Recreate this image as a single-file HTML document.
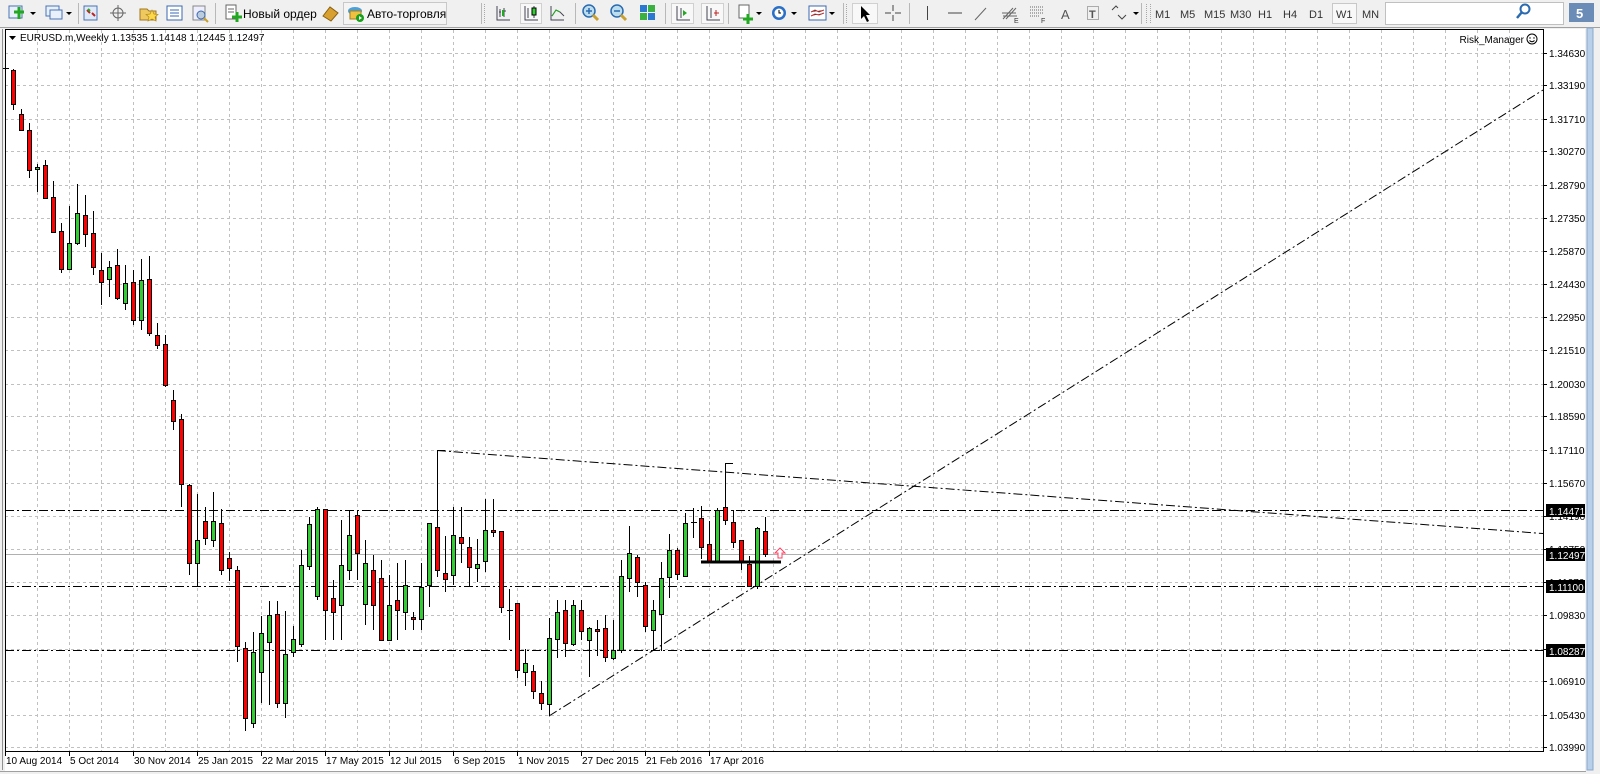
<!DOCTYPE html>
<html><head><meta charset="utf-8"><style>
html,body{margin:0;padding:0;background:#f0f0f0;overflow:hidden}
svg{display:block}
text{font-family:"Liberation Sans",sans-serif}
</style></head><body>
<svg width="1600" height="774" viewBox="0 0 1600 774" xmlns="http://www.w3.org/2000/svg">
<rect width="1600" height="774" fill="#f0f0f0"/>
<rect x="0" y="0" width="1600" height="27" fill="#f0f0f0"/>
<line x1="0" y1="27.5" x2="1600" y2="27.5" stroke="#a0a0a0"/>
<g stroke="#b8b8b8">
<line x1="78.5" y1="3" x2="78.5" y2="24"/><line x1="215.5" y1="3" x2="215.5" y2="24"/>
<line x1="481.5" y1="3" x2="481.5" y2="24"/><line x1="575.5" y1="3" x2="575.5" y2="24"/>
<line x1="665.5" y1="3" x2="665.5" y2="24"/><line x1="728.5" y1="3" x2="728.5" y2="24"/>
<line x1="843.5" y1="3" x2="843.5" y2="24"/><line x1="909.5" y1="3" x2="909.5" y2="24"/>
<line x1="1141.5" y1="3" x2="1141.5" y2="24"/>
</g>
<g stroke="#a8a8a8" stroke-dasharray="1 1"><line x1="484.5" y1="4" x2="484.5" y2="23"/><line x1="846.5" y1="4" x2="846.5" y2="23"/><line x1="1150.5" y1="4" x2="1150.5" y2="23"/><line x1="1146.5" y1="4" x2="1146.5" y2="23"/></g>
<rect x="9" y="6" width="13" height="12" fill="#e8f0fb" stroke="#4a74b5"/><path d="M14 12h10M19 7v12" stroke="#22a822" stroke-width="3"/>
<path d="M30 12l3 3 3-3z" fill="#000"/>
<rect x="46" y="6" width="13" height="10" fill="#e8f0fb" stroke="#4a74b5"/><rect x="50" y="10" width="12" height="9" fill="#e8f0fb" stroke="#4a74b5"/>
<path d="M66 12l3 3 3-3z" fill="#000"/>
<rect x="84" y="6" width="13" height="14" fill="#dfe9f7" stroke="#4a74b5"/><path d="M87 10l3 3M92 13l3 3" stroke="#c02020" stroke-width="2"/><path d="M88 9l2 2" stroke="#22a822" stroke-width="2"/>
<circle cx="118" cy="13" r="5" fill="none" stroke="#666"/><path d="M118 5v16M110 13h16" stroke="#666"/>
<path d="M140 9h7l2 2h7v9h-16z" fill="#f0c860" stroke="#a07820"/><path d="M152 10l2 4 4 .5-3 2.5 1 4-4-2-4 2 1-4-3-2.5 4-.5z" fill="#ffd84a" stroke="#b08a20" stroke-width=".7"/>
<rect x="167" y="6" width="15" height="14" fill="#fff" stroke="#3a68b0"/><path d="M170 10h9M170 13h9M170 16h9" stroke="#3a68b0"/>
<rect x="193" y="6" width="12" height="14" fill="#eef" stroke="#888"/><circle cx="201" cy="15" r="4" fill="#bcd" stroke="#3a68b0"/><path d="M204 18l4 4" stroke="#c8a030" stroke-width="2"/>
<rect x="226" y="5" width="10" height="14" fill="#fff" stroke="#666"/><path d="M228 9h6M228 12h6" stroke="#666"/><path d="M232 17h10M237 12v10" stroke="#22a822" stroke-width="3"/>
<text x="243" y="18" font-size="12" fill="#000">Новый ордер</text>
<path d="M323 16l7-9 8 6-7 8z" fill="#d8a030" stroke="#8a6010"/>
<rect x="343.5" y="2.5" width="103" height="22" fill="#f4f4f4" stroke="#c8c8c8"/>
<ellipse cx="355" cy="11" rx="7" ry="4" fill="#4aa0d8"/><rect x="350" y="11" width="11" height="8" fill="#f0c040" stroke="#a08020"/><circle cx="360" cy="18" r="4" fill="#18a018"/><path d="M359 16l3 2-3 2z" fill="#fff"/>
<text x="367" y="18" font-size="12" fill="#000">Авто-торговля</text>
<path d="M497 6v14h13M500 9v8M504 8v9M506 11h-2M501 12h-2" stroke="#445" fill="none"/><path d="M503 10v6" stroke="#22a822" stroke-width="2"/>
<rect x="520.5" y="3.5" width="21" height="20" fill="#f8f8f8" stroke="#d0d0d0"/>
<path d="M525 6v14h13M528 8v10M534 6v12" stroke="#445" fill="none"/><rect x="532" y="8" width="4" height="7" fill="#3c3" stroke="#000"/>
<path d="M551 6v14h13M552 16l4-6 4 2 4 4" stroke="#445" fill="none"/><path d="M552 16l4-6 4 2" stroke="#22a822" fill="none"/>
<circle cx="589" cy="11" r="6" fill="#bde" stroke="#2a6ab0" stroke-width="1.5"/><path d="M586 11h6M589 8v6" stroke="#2a6ab0" stroke-width="1.5"/><path d="M593 15l5 5" stroke="#c8a030" stroke-width="3"/>
<circle cx="617" cy="11" r="6" fill="#bde" stroke="#2a6ab0" stroke-width="1.5"/><path d="M614 11h6" stroke="#2a6ab0" stroke-width="1.5"/><path d="M621 15l5 5" stroke="#c8a030" stroke-width="3"/>
<rect x="640" y="5" width="7" height="7" fill="#2a78d0"/><rect x="648" y="5" width="7" height="7" fill="#3ab040"/><rect x="640" y="13" width="7" height="7" fill="#3ab040"/><rect x="648" y="13" width="7" height="7" fill="#2a78d0"/>
<rect x="671.5" y="3.5" width="22" height="20" fill="#f8f8f8" stroke="#d0d0d0"/><path d="M677 6v14h13M681 8v10" stroke="#445" fill="none"/><path d="M683 10l4 3-4 3z" fill="#22a822"/>
<rect x="701.5" y="3.5" width="22" height="20" fill="#f8f8f8" stroke="#d0d0d0"/><path d="M707 6v14h13M711 8v10" stroke="#445" fill="none"/><path d="M714 13h5M716 10v6" stroke="#c02020"/>
<rect x="739" y="5" width="10" height="13" fill="#fff" stroke="#666"/><path d="M743 19h10M748 14v10" stroke="#22a822" stroke-width="3"/><path d="M756 12l3 3 3-3z" fill="#000"/>
<circle cx="779" cy="13" r="7" fill="#2a70c8"/><circle cx="779" cy="13" r="4.5" fill="#fff"/><path d="M779 10v3h2" stroke="#000" fill="none"/><path d="M791 12l3 3 3-3z" fill="#000"/>
<rect x="809" y="6" width="17" height="14" fill="#fff" stroke="#3a68b0"/><path d="M811 12l4-2 4 2 5-2M811 16l4-2 4 1 5-2" stroke="#c03030"/><path d="M829 12l3 3 3-3z" fill="#000"/>
<rect x="852.5" y="3.5" width="25" height="20" fill="#f8f8f8" stroke="#d0d0d0"/><path d="M861 6v13l3-3 3 6 2-1-3-6h4z" fill="#000"/>
<path d="M893 5v6M893 15v6M885 13h6M895 13h6" stroke="#444"/>
<path d="M927.5 6v14" stroke="#444"/><path d="M948 13h14" stroke="#444"/><path d="M975 20l11-12" stroke="#666"/>
<path d="M1003 19l10-11M1006 19l10-11M1002 13h14M1003 16h14" stroke="#666"/><text x="1014" y="23" font-size="7" fill="#333">E</text>
<path d="M1030 7h13M1030 10h13M1030 13h13M1030 16h10" stroke="#666" stroke-dasharray="1 1"/><text x="1041" y="23" font-size="7" fill="#333">F</text>
<text x="1061" y="19" font-size="13" fill="#555">A</text>
<rect x="1087.5" y="6.5" width="11" height="13" fill="none" stroke="#666" stroke-dasharray="1 1"/><text x="1089" y="18" font-size="11" fill="#555" font-weight="bold">T</text>
<path d="M1112 10l4-4 2 2M1118 15l4 4 4-4" stroke="#444" fill="none"/><path d="M1133 12l3 3 3-3z" fill="#000"/>
<g font-size="11" fill="#333">
<text x="1155" y="18">M1</text><text x="1180" y="18">M5</text><text x="1204" y="18">M15</text><text x="1230" y="18">M30</text><text x="1258" y="18">H1</text><text x="1283" y="18">H4</text><text x="1309" y="18">D1</text>
<rect x="1332.5" y="3.5" width="24" height="20" fill="#f8f8f8" stroke="#c8c8c8"/><text x="1336" y="18">W1</text><text x="1362" y="18">MN</text>
</g>
<rect x="1385.5" y="2.5" width="178" height="22" fill="#fff" stroke="#c0c0c0"/>
<circle cx="1525" cy="9" r="4.5" fill="none" stroke="#2a6ab0" stroke-width="2"/><path d="M1522 12l-5 6" stroke="#2a6ab0" stroke-width="2.5"/>
<rect x="1569" y="3" width="25" height="19" fill="#6c8cb8"/><text x="1576" y="18" font-size="13" font-weight="bold" fill="#fff">5</text>
<rect x="0" y="28" width="1600" height="746" fill="#f0f0f0"/>
<rect x="5" y="29" width="1580" height="742" fill="#fff"/>
<rect x="1586" y="28" width="14" height="746" fill="#f0f0f0"/>
<rect x="1587" y="28" width="6" height="742" fill="#b8d0ea" stroke="#8aa8cc"/>
<line x1="2.5" y1="29" x2="2.5" y2="770" stroke="#909090"/>
<g stroke="#c0c0c0" stroke-dasharray="3 3">
<path d="M5 53.5H1543M5 85.5H1543M5 119.5H1543M5 151.5H1543M5 185.5H1543M5 218.5H1543M5 251.5H1543M5 284.5H1543M5 317.5H1543M5 350.5H1543M5 384.5H1543M5 416.5H1543M5 450.5H1543M5 483.5H1543M5 516.5H1543M5 549.5H1543M5 582.5H1543M5 615.5H1543M5 649.5H1543M5 681.5H1543M5 715.5H1543M5 747.5H1543"/>
<path d="M37.5 30V751M69.5 30V751M101.5 30V751M133.5 30V751M165.5 30V751M197.5 30V751M229.5 30V751M261.5 30V751M293.5 30V751M325.5 30V751M357.5 30V751M389.5 30V751M421.5 30V751M453.5 30V751M485.5 30V751M517.5 30V751M549.5 30V751M581.5 30V751M613.5 30V751M645.5 30V751M677.5 30V751M709.5 30V751M741.5 30V751M773.5 30V751M805.5 30V751M837.5 30V751M869.5 30V751M901.5 30V751M933.5 30V751M965.5 30V751M997.5 30V751M1029.5 30V751M1061.5 30V751M1093.5 30V751M1125.5 30V751M1157.5 30V751M1189.5 30V751M1221.5 30V751M1253.5 30V751M1285.5 30V751M1317.5 30V751M1349.5 30V751M1381.5 30V751M1413.5 30V751M1445.5 30V751M1477.5 30V751M1509.5 30V751"/>
</g>
<line x1="5" y1="554.5" x2="1543" y2="554.5" stroke="#b0b0b0"/>
<g stroke="#000" stroke-dasharray="9 3 2 3">
<line x1="5" y1="510.5" x2="1543" y2="510.5"/>
<line x1="5" y1="586.5" x2="1543" y2="586.5"/>
<line x1="5" y1="650.5" x2="1543" y2="650.5"/>
<line x1="437" y1="450.5" x2="1543" y2="533.5"/>
<line x1="549" y1="716" x2="1543" y2="90"/>
</g>
<path stroke="#000" fill="none" d="M5.5 63V83M13.5 69V110M21.5 109V130M29.5 123V178M37.5 164V192M45.5 160V198M53.5 181V233M61.5 223V273M69.5 206V270M77.5 184V245M85.5 195V247M93.5 211V275M101.5 253V305M109.5 261V297M117.5 249V300M125.5 265V310M133.5 270V325M141.5 259V330M149.5 256V336M157.5 323V349M165.5 335V387M173.5 390V430M181.5 414V507M189.5 484V575M197.5 494V586M205.5 507V545M213.5 492V547M221.5 509V575M229.5 552V581M237.5 566V662M245.5 642V731M253.5 632V728M261.5 616V703M269.5 601V705M277.5 601V708M285.5 611V718M293.5 626V657M301.5 550V647M309.5 517V570M317.5 507V600M325.5 509V640M333.5 580V640M341.5 520V640M349.5 510V580M357.5 510V580M365.5 540V625M373.5 555V630M381.5 560V640M389.5 575V640M397.5 563V640M405.5 560V630M413.5 612V630M421.5 563V630M429.5 523V607M437.5 450V577M445.5 536V592M453.5 507V585M461.5 507V563M469.5 537V587M477.5 539V582M485.5 499V572M493.5 499V537M501.5 531V613M509.5 589V640M517.5 603V678M525.5 649V686M533.5 665V699M541.5 681V710M549.5 618V716M557.5 600V658M565.5 600V657M573.5 600V646M581.5 600V640M589.5 627V677M597.5 620V656M605.5 615V662M613.5 620V660M621.5 560V653M629.5 526V592M637.5 555V597M645.5 582V632M653.5 600V651M661.5 562V651M669.5 534V598M677.5 548V580M685.5 513V577M693.5 508V538M701.5 506V559M709.5 521V561M717.5 508V561M725.5 463V525M733.5 510V548M741.5 540V570M749.5 556V586M757.5 527V589M765.5 517V557"/>
<path stroke="#000" d="M437 450.5h8M725 463.5h8M3 68.5h6M507 610.5h6M691 522.5h6"/>
<g stroke="#000" fill="#ff0000">
<rect x="11.5" y="70.5" width="4" height="34"/><rect x="19.5" y="114.5" width="4" height="16"/><rect x="27.5" y="130.5" width="4" height="40"/>
<rect x="43.5" y="165.5" width="4" height="33"/><rect x="51.5" y="197.5" width="4" height="35"/><rect x="59.5" y="231.5" width="4" height="38"/>
<rect x="83.5" y="215.5" width="4" height="19"/><rect x="91.5" y="233.5" width="4" height="34"/><rect x="99.5" y="270.5" width="4" height="12"/>
<rect x="115.5" y="265.5" width="4" height="33"/><rect x="131.5" y="282.5" width="4" height="38"/><rect x="147.5" y="279.5" width="4" height="54"/>
<rect x="155.5" y="335.5" width="4" height="10"/><rect x="163.5" y="344.5" width="4" height="41"/><rect x="171.5" y="400.5" width="4" height="21"/>
<rect x="179.5" y="419.5" width="4" height="65"/><rect x="187.5" y="485.5" width="4" height="78"/><rect x="203.5" y="521.5" width="4" height="17"/>
<rect x="219.5" y="523.5" width="4" height="47"/><rect x="227.5" y="558.5" width="4" height="10"/><rect x="235.5" y="570.5" width="4" height="76"/>
<rect x="243.5" y="648.5" width="4" height="70"/><rect x="275.5" y="614.5" width="4" height="89"/><rect x="323.5" y="509.5" width="4" height="101"/>
<rect x="331.5" y="598.5" width="4" height="14"/><rect x="355.5" y="515.5" width="4" height="38"/><rect x="371.5" y="570.5" width="4" height="35"/>
<rect x="379.5" y="578.5" width="4" height="62"/><rect x="395.5" y="600.5" width="4" height="10"/><rect x="411.5" y="617.5" width="4" height="2"/>
<rect x="435.5" y="527.5" width="4" height="43"/><rect x="443.5" y="573.5" width="4" height="6"/><rect x="459.5" y="537.5" width="4" height="6"/>
<rect x="467.5" y="547.5" width="4" height="20"/><rect x="491.5" y="530.5" width="4" height="2"/><rect x="499.5" y="531.5" width="4" height="76"/>
<rect x="515.5" y="603.5" width="4" height="67"/><rect x="531.5" y="671.5" width="4" height="20"/><rect x="539.5" y="693.5" width="4" height="10"/>
<rect x="563.5" y="610.5" width="4" height="33"/><rect x="579.5" y="610.5" width="4" height="21"/><rect x="595.5" y="629.5" width="4" height="2"/>
<rect x="603.5" y="628.5" width="4" height="29"/><rect x="635.5" y="557.5" width="4" height="25"/><rect x="643.5" y="585.5" width="4" height="41"/>
<rect x="675.5" y="550.5" width="4" height="24"/><rect x="699.5" y="518.5" width="4" height="29"/><rect x="707.5" y="544.5" width="4" height="17"/>
<rect x="723.5" y="507.5" width="4" height="13"/><rect x="731.5" y="522.5" width="4" height="20"/><rect x="739.5" y="540.5" width="4" height="21"/>
<rect x="747.5" y="564.5" width="4" height="22"/><rect x="763.5" y="531.5" width="4" height="23"/>
</g>
<g stroke="#000" fill="#33cc33">
<rect x="35.5" y="167.5" width="4" height="2"/><rect x="67.5" y="243.5" width="4" height="26"/><rect x="75.5" y="213.5" width="4" height="30"/>
<rect x="107.5" y="267.5" width="4" height="12"/><rect x="123.5" y="283.5" width="4" height="20"/><rect x="139.5" y="280.5" width="4" height="40"/>
<rect x="195.5" y="540.5" width="4" height="23"/><rect x="211.5" y="521.5" width="4" height="19"/><rect x="251.5" y="652.5" width="4" height="71"/>
<rect x="259.5" y="633.5" width="4" height="39"/><rect x="267.5" y="615.5" width="4" height="27"/><rect x="283.5" y="654.5" width="4" height="49"/>
<rect x="291.5" y="639.5" width="4" height="13"/><rect x="299.5" y="565.5" width="4" height="79"/><rect x="307.5" y="524.5" width="4" height="42"/>
<rect x="315.5" y="509.5" width="4" height="87"/><rect x="339.5" y="565.5" width="4" height="40"/><rect x="347.5" y="535.5" width="4" height="35"/>
<rect x="363.5" y="563.5" width="4" height="41"/><rect x="387.5" y="605.5" width="4" height="35"/><rect x="403.5" y="585.5" width="4" height="27"/>
<rect x="419.5" y="587.5" width="4" height="32"/><rect x="427.5" y="523.5" width="4" height="62"/><rect x="451.5" y="535.5" width="4" height="40"/>
<rect x="475.5" y="564.5" width="4" height="4"/><rect x="483.5" y="530.5" width="4" height="31"/><rect x="523.5" y="663.5" width="4" height="9"/>
<rect x="547.5" y="638.5" width="4" height="66"/><rect x="555.5" y="612.5" width="4" height="27"/><rect x="571.5" y="605.5" width="4" height="39"/>
<rect x="587.5" y="628.5" width="4" height="12"/><rect x="611.5" y="650.5" width="4" height="8"/><rect x="619.5" y="576.5" width="4" height="74"/>
<rect x="627.5" y="553.5" width="4" height="25"/><rect x="651.5" y="610.5" width="4" height="20"/><rect x="659.5" y="578.5" width="4" height="36"/>
<rect x="667.5" y="550.5" width="4" height="27"/><rect x="683.5" y="523.5" width="4" height="53"/><rect x="715.5" y="510.5" width="4" height="51"/>
<rect x="755.5" y="528.5" width="4" height="58"/>
</g>
<line x1="701" y1="562" x2="781" y2="562" stroke="#000" stroke-width="3"/>
<path d="M780 548l-5 5h3v5h4v-5h3z" fill="#fff" stroke="#ff4060"/>
<rect x="5.5" y="29.5" width="1538" height="722" fill="none" stroke="#000"/>
<path d="M9 36h7l-3.5 4z" fill="#000"/>
<text x="20" y="41" font-size="10" fill="#000">EURUSD.m,Weekly  1.13535 1.14148 1.12445 1.12497</text>
<text x="1524" y="43" font-size="10" fill="#000" text-anchor="end">Risk_Manager</text>
<circle cx="1532" cy="39" r="5" fill="none" stroke="#000"/><circle cx="1530" cy="38" r=".7"/><circle cx="1534" cy="38" r=".7"/><path d="M1529.5 40.5q2.5 2.5 5 0" fill="none" stroke="#000"/>
<g stroke="#000"><path d="M1543 53.5h4M1543 85.5h4M1543 119.5h4M1543 151.5h4M1543 185.5h4M1543 218.5h4M1543 251.5h4M1543 284.5h4M1543 317.5h4M1543 350.5h4M1543 384.5h4M1543 416.5h4M1543 450.5h4M1543 483.5h4M1543 516.5h4M1543 549.5h4M1543 582.5h4M1543 615.5h4M1543 649.5h4M1543 681.5h4M1543 715.5h4M1543 747.5h4"/></g>
<g font-size="10" fill="#000">
<text x="1549" y="57">1.34630</text><text x="1549" y="89">1.33190</text><text x="1549" y="123">1.31710</text><text x="1549" y="155">1.30270</text>
<text x="1549" y="189">1.28790</text><text x="1549" y="222">1.27350</text><text x="1549" y="255">1.25870</text><text x="1549" y="288">1.24430</text>
<text x="1549" y="321">1.22950</text><text x="1549" y="354">1.21510</text><text x="1549" y="388">1.20030</text><text x="1549" y="420">1.18590</text>
<text x="1549" y="454">1.17110</text><text x="1549" y="487">1.15670</text><text x="1549" y="520">1.14190</text><text x="1549" y="553">1.12750</text>
<text x="1549" y="586">1.11270</text><text x="1549" y="619">1.09830</text><text x="1549" y="653">1.08350</text><text x="1549" y="685">1.06910</text>
<text x="1549" y="719">1.05430</text><text x="1549" y="751">1.03990</text>
</g>
<g fill="#000"><rect x="1546" y="504" width="39" height="13"/><rect x="1546" y="548" width="39" height="13"/><rect x="1546" y="580" width="39" height="13"/><rect x="1546" y="644" width="39" height="13"/></g>
<g font-size="10" fill="#fff"><text x="1549" y="515">1.14471</text><text x="1549" y="559">1.12497</text><text x="1549" y="591">1.11100</text><text x="1549" y="655">1.08287</text></g>
<path stroke="#000" d="M5.5 751v5M69.5 751v5M133.5 751v5M197.5 751v5M261.5 751v5M325.5 751v5M389.5 751v5M453.5 751v5M517.5 751v5M581.5 751v5M645.5 751v5M709.5 751v5"/>
<g font-size="10" fill="#000">
<text x="6" y="764">10 Aug 2014</text><text x="70" y="764">5 Oct 2014</text><text x="134" y="764">30 Nov 2014</text><text x="198" y="764">25 Jan 2015</text>
<text x="262" y="764">22 Mar 2015</text><text x="326" y="764">17 May 2015</text><text x="390" y="764">12 Jul 2015</text><text x="454" y="764">6 Sep 2015</text>
<text x="518" y="764">1 Nov 2015</text><text x="582" y="764">27 Dec 2015</text><text x="646" y="764">21 Feb 2016</text><text x="710" y="764">17 Apr 2016</text>
</g>
<line x1="0" y1="771.5" x2="1586" y2="771.5" stroke="#a0a0a0"/>
</svg>
</body></html>
